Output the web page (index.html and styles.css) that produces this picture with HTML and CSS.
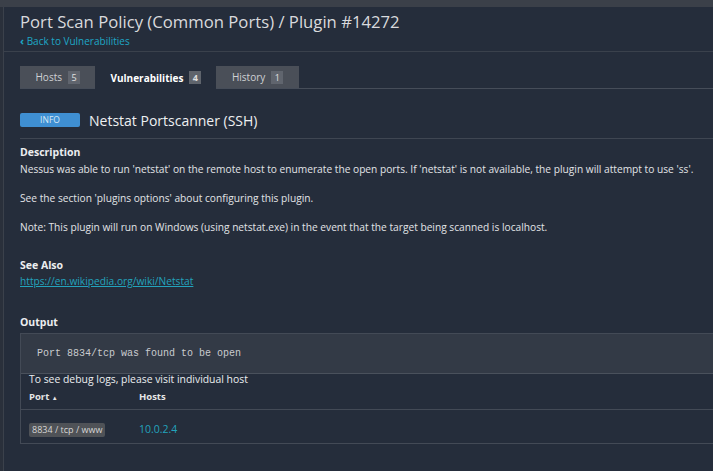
FILE: index.html
```html
<!DOCTYPE html>
<html>
<head>
<meta charset="utf-8">
<link rel="stylesheet" href="styles.css">
</head>
<body>
<div class="topbar"></div>
<div class="app">
  <div class="rail"></div>
  <div class="main">
    <header class="header">
      <h1 class="title">Port Scan Policy (Common Ports) / Plugin #14272</h1>
      <a class="back" href="#"><span class="chev">&#8249;</span> Back to Vulnerabilities</a>
    </header>
    <div class="content">
      <nav class="tabs">
        <div class="tab">Hosts <span class="count">5</span></div>
        <div class="tab active">Vulnerabilities <span class="count">4</span></div>
        <div class="tab">History <span class="count">1</span></div>
      </nav>
      <div class="plugin-head">
        <span class="sev">INFO</span>
        <h2 class="plugin-name">Netstat Portscanner (SSH)</h2>
      </div>
      <section class="block desc">
        <h3 class="label">Description</h3>
        <p class="text">Nessus was able to run 'netstat' on the remote host to enumerate the open ports. If 'netstat' is not available, the plugin will attempt to use 'ss'.</p>
        <p class="text">See the section 'plugins options' about configuring this plugin.</p>
        <p class="text">Note: This plugin will run on Windows (using netstat.exe) in the event that the target being scanned is localhost.</p>
      </section>
      <section class="block see">
        <h3 class="label">See Also</h3>
        <a class="link" href="#">https://en.wikipedia.org/wiki/Netstat</a>
      </section>
      <section class="block output">
        <h3 class="label">Output</h3>
        <div class="outbox">
          <pre class="pre">Port 8834/tcp was found to be open</pre>
          <div class="debug">To see debug logs, please visit individual host</div>
          <div class="thead">
            <div class="c1">Port <span class="arrow">&#9650;</span></div>
            <div class="c2">Hosts</div>
          </div>
          <div class="trow">
            <div class="c1"><span class="port">8834 / tcp / www</span></div>
            <div class="c2"><a class="host" href="#">10.0.2.4</a></div>
          </div>
        </div>
      </section>
    </div>
  </div>
</div>
</body>
</html>
```
FILE: styles.css
```css
* { box-sizing: border-box; }
html, body { margin: 0; padding: 0; }
body {
  background: #252d3b;
  font-family: "Open Sans", "Noto Sans", sans-serif;
  color: #e6e6e6;
  width: 713px;
  height: 471px;
  overflow: hidden;
}
.topbar { height: 7px; background: #3b4049; }
.app { display: flex; height: 464px; }
.rail { width: 4px; background: #2a303b; border-right: 1px solid #3b414b; flex: none; }
.main { flex: 1; min-width: 0; }
.header {
  height: 45px;
  padding: 3px 0 0 16px;
  border-bottom: 1px solid #3a414c;
}
.title {
  margin: 0;
  font-weight: 400;
  font-size: 16.7px;
  line-height: 24px;
  color: #d9dadd;
}
.back {
  display: block;
  font-size: 10px;
  line-height: 14px;
  color: #1ea7c6;
  text-decoration: none;
}
.chev { font-size: 11px; font-weight: 700; }
.content { padding-left: 16px; }
.tabs {
  display: flex;
  margin-top: 14px;
  border-bottom: 1px solid #464d59;
  height: 23px;
}
.tab {
  height: 22px;
  padding: 0 15.5px;
  display: flex;
  align-items: center;
  gap: 6px;
  font-size: 10px;
  color: #cfd1d4;
  background: #4a4f58;
}
.tab.active { background: #252d3b; color: #fff; font-weight: 700; height: 23px; padding: 0 15px; }
.count {
  display: inline-block;
  min-width: 12px;
  text-align: center;
  background: #60656e;
  color: #e0e0e0;
  font-size: 9px;
  font-weight: 400;
  padding: 0 3px;
  line-height: 13px;
}
.tab.active .count { background: #5f646c; font-weight: 700; }
.plugin-head {
  display: flex;
  align-items: center;
  gap: 9px;
  margin-top: 21px;
  height: 20px;
  border-bottom: 1px solid #3f4652;
  box-sizing: content-box;
  padding-bottom: 8px;
}
.sev {
  width: 60px;
  height: 14px;
  background: #3f8fd2;
  border-radius: 2px;
  color: #d8e8f5;
  font-size: 8.5px;
  line-height: 14px;
  text-align: center;
}
.plugin-name {
  margin: 0;
  font-weight: 400;
  font-size: 14px;
  color: #eef0f2;
}
.block { margin-top: 6px; }
.label {
  margin: 0;
  font-size: 10.5px;
  font-weight: 700;
  line-height: 14px;
  color: #eceef0;
}
.desc .label { margin-bottom: 3px; }
.text {
  margin: 0 0 15px;
  font-size: 10.2px;
  line-height: 14px;
  color: #e2e4e7;
}
.see { margin-top: 24px; }
.link {
  display: block;
  width: fit-content;
  margin-top: 2px;
  font-size: 10.2px;
  color: #23a3bd;
  line-height: 14px;
}
.output { margin-top: 27px; }
.outbox {
  margin-top: 4px;
  border-left: 1px solid #434a56;
  border-top: 1px solid #434a56;
  border-bottom: 1px solid #434a56;
}
.pre {
  margin: 0;
  background: #333a46;
  font-family: "Liberation Mono", monospace;
  font-size: 10px;
  color: #c9cbcf;
  padding: 13px 16px 12px;
  line-height: 14px;
  border-bottom: 1px solid #4a515c;
}
.debug { font-size: 10.4px; line-height: 10px; padding-left: 8px; color: #eceef0; }
.thead {
  display: flex;
  height: 26px;
  align-items: center;
  font-size: 9.5px;
  font-weight: 700;
  border-bottom: 1px solid #434a56;
}
.c1 { width: 118px; padding-left: 8px; }
.c2 { flex: 1; }
.arrow { font-size: 6px; }
.trow { display: flex; height: 33px; align-items: center; }
.port {
  display: inline-block;
  background: #4f5257;
  color: #d6d6d6;
  font-size: 9px;
  line-height: 14px;
  padding: 0 3px;
  border-radius: 2px;
}
.host { color: #23a3bd; text-decoration: none; font-size: 10.5px; }
```
